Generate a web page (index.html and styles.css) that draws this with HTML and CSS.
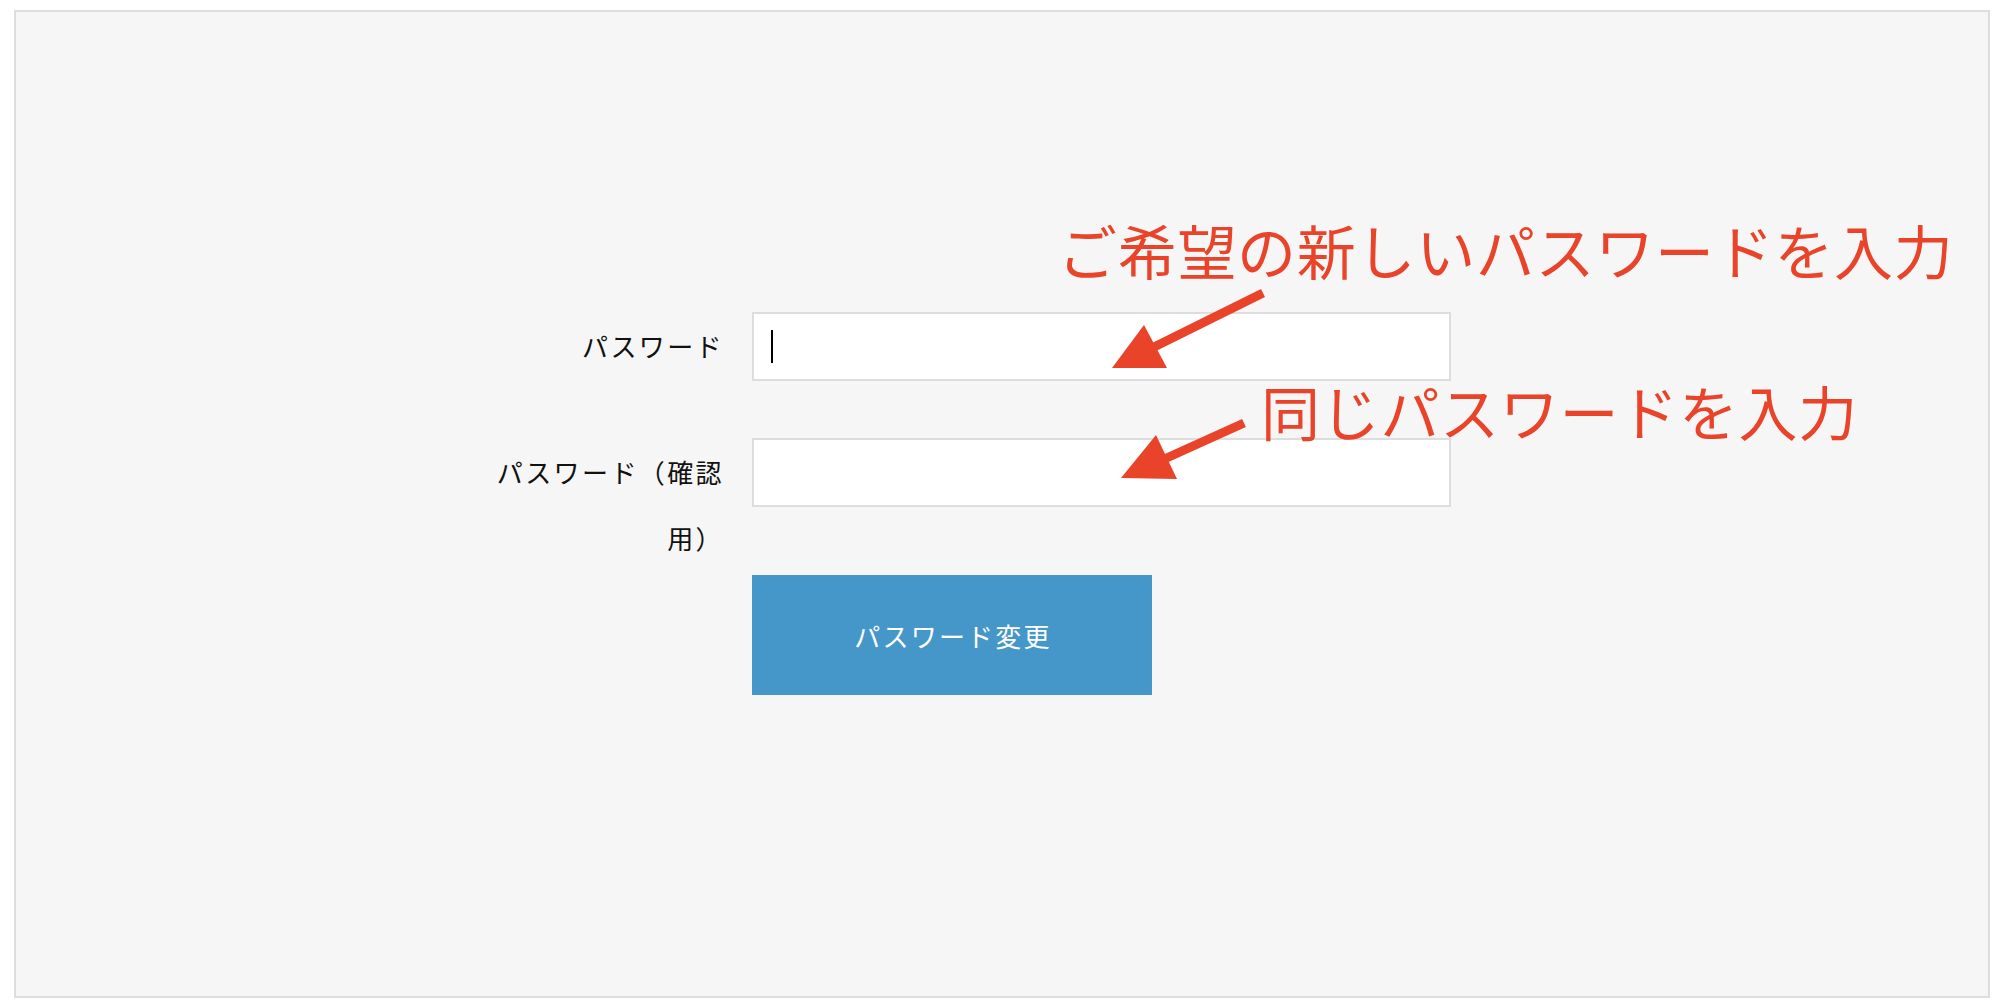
FILE: index.html
```html
<!DOCTYPE html>
<html lang="ja">
<head>
<meta charset="utf-8">
<title>パスワード変更</title>
<link rel="stylesheet" href="styles.css">
</head>
<body>
<div class="frame">
  <form class="form">
    <div class="row row-first">
      <label class="label">パスワード</label>
      <div class="field">
        <input class="input" type="password">
        <span class="caret"></span>
      </div>
    </div>
    <div class="row">
      <label class="label">パスワード（確認用）</label>
      <div class="field">
        <input class="input" type="password">
      </div>
    </div>
    <div class="actions">
      <button class="btn" type="button">パスワード変更</button>
    </div>
  </form>
</div>
<div class="note note-1">ご希望の新しいパスワードを入力</div>
<div class="note note-2">同じパスワードを入力</div>
<svg class="arrows" width="1998" height="1002" viewBox="0 0 1998 1002">
  <line x1="1263" y1="293" x2="1148" y2="350" stroke="#e9432a" stroke-width="9"/>
  <polygon points="1112,368 1144,325 1167,368" fill="#e9432a"/>
  <line x1="1244" y1="423" x2="1160" y2="461" stroke="#e9432a" stroke-width="9"/>
  <polygon points="1121,478 1156,435 1177,479" fill="#e9432a"/>
</svg>
</body>
</html>
```
FILE: styles.css
```css
html, body {
  margin: 0;
  padding: 0;
  background: #ffffff;
}
body {
  font-family: "Noto Sans CJK JP", "Noto Sans", sans-serif;
  color: #111;
  position: relative;
  width: 1998px;
  height: 1002px;
  overflow: hidden;
}
.frame {
  box-sizing: border-box;
  margin: 10px 0 0 14px;
  width: 1976px;
  height: 988px;
  border: 2px solid #dddddd;
  background: #f6f6f6;
}
.form {
  margin: 0;
  padding: 300px 0 0 478px;
}
.row {
  display: flex;
  align-items: flex-start;
  gap: 34px;
}
.row-first {
  margin-bottom: 57px;
}
.label {
  width: 230px;
  margin-right: -6px;
  flex: none;
  text-align: right;
  font-size: 26px;
  letter-spacing: 2.4px;
  line-height: 66px;
  padding-top: 2px;
  margin-top: -1px;
}
.field {
  position: relative;
  width: 699px;
  height: 69px;
}
.input {
  box-sizing: border-box;
  width: 699px;
  height: 69px;
  border: 2px solid #dddddd;
  background: #ffffff;
  margin: 0;
  padding: 0 16px;
  outline: none;
  display: block;
}
.caret {
  position: absolute;
  left: 19px;
  top: 18px;
  width: 2px;
  height: 33px;
  background: #000;
}
.actions {
  padding-left: 258px;
  margin-top: 4px;
}
.btn {
  width: 400px;
  height: 120px;
  border: none;
  margin: 0;
  background: #4596c9;
  color: #ffffff;
  font-family: "Noto Sans CJK JP", "Noto Sans", sans-serif;
  font-size: 26px;
  letter-spacing: 2.2px;
  text-indent: 2px;
  cursor: pointer;
}
.note {
  position: absolute;
  color: #e9432a;
  font-size: 59px;
  letter-spacing: 0.7px;
  line-height: 59px;
  white-space: nowrap;
}
.note-1 {
  left: 1058px;
  top: 220px;
}
.note-2 {
  left: 1261px;
  top: 381px;
}
.arrows {
  position: absolute;
  left: 0;
  top: 0;
  pointer-events: none;
}
```
